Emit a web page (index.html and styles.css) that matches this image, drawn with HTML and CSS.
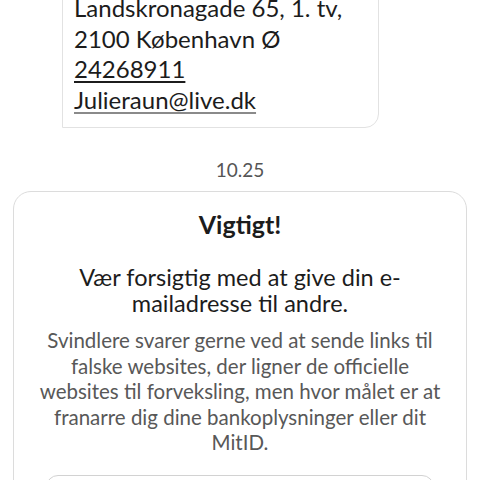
FILE: index.html
```html
<!DOCTYPE html>
<html lang="da">

<head>
    <meta charset="UTF-8">
    <meta name="viewport" content="width=device-width, initial-scale=1.0">
    <title>Besked</title>
    <link rel="stylesheet" href="styles.css">
</head>

<body>
    <div class="chat">
        <!-- modtaget besked -->
        <div class="bubble">
            <p>Landskronagade 65, 1. tv,</p>
            <p>2100 København Ø</p>
            <p><a class="phone">24268911</a></p>
            <p><a class="mail">Julieraun@live.dk</a></p>
        </div>

        <div class="time">10.25</div>

        <!-- advarsel -->
        <div class="notice">
            <h2 class="notice_title">Vigtigt!</h2>
            <p class="notice_lead">Vær forsigtig med at give din e-mailadresse til andre.</p>
            <p class="notice_text">Svindlere svarer gerne ved at sende links til falske websites, der ligner de officielle websites til forveksling, men hvor målet er at franarre dig dine bankoplysninger eller dit MitID.</p>
            <div class="notice_btn"></div>
        </div>
    </div>
</body>

</html>
```

FILE: styles.css
```css
* {
    margin: 0;
    padding: 0;
    box-sizing: border-box;
}

body {
    background: #fff;
    font-family: Lato, "Open Sans", sans-serif;
    color: #1c1c1c;
    overflow: hidden;
}

.chat {
    margin-top: -18px;
}

.bubble {
    width: 317px;
    margin-left: 62px;
    padding: 10px 11px 12px;
    border: 1px solid #e2e2e2;
    border-radius: 14px 14px 14px 0;
    font-size: 24px;
    line-height: 30.5px;
}

.bubble a {
    color: #1c1c1c;
    text-decoration: underline;
    text-underline-offset: 3px;
}

.bubble .mail {
    text-decoration-color: #8a8a8a;
    text-decoration-thickness: 2px;
}

.time {
    margin-top: 31px;
    text-align: center;
    font-size: 19px;
    line-height: 22px;
    color: #555;
}

.notice {
    margin: 10px 13px 0;
    padding: 18px 18px 0;
    border: 1px solid #dcdcdc;
    border-radius: 18px;
    text-align: center;
}

.notice_title {
    font-size: 25px;
    font-weight: 700;
    line-height: 28px;
}

.notice_lead {
    margin-top: 26px;
    font-size: 23.5px;
    line-height: 26px;
}

.notice_text {
    margin-top: 12px;
    font-size: 20.5px;
    line-height: 25.5px;
    color: #585858;
}

.notice_btn {
    height: 44px;
    margin: 19px 14px 0;
    border: 1px solid #d2d2d2;
    border-radius: 12px;
}
```
